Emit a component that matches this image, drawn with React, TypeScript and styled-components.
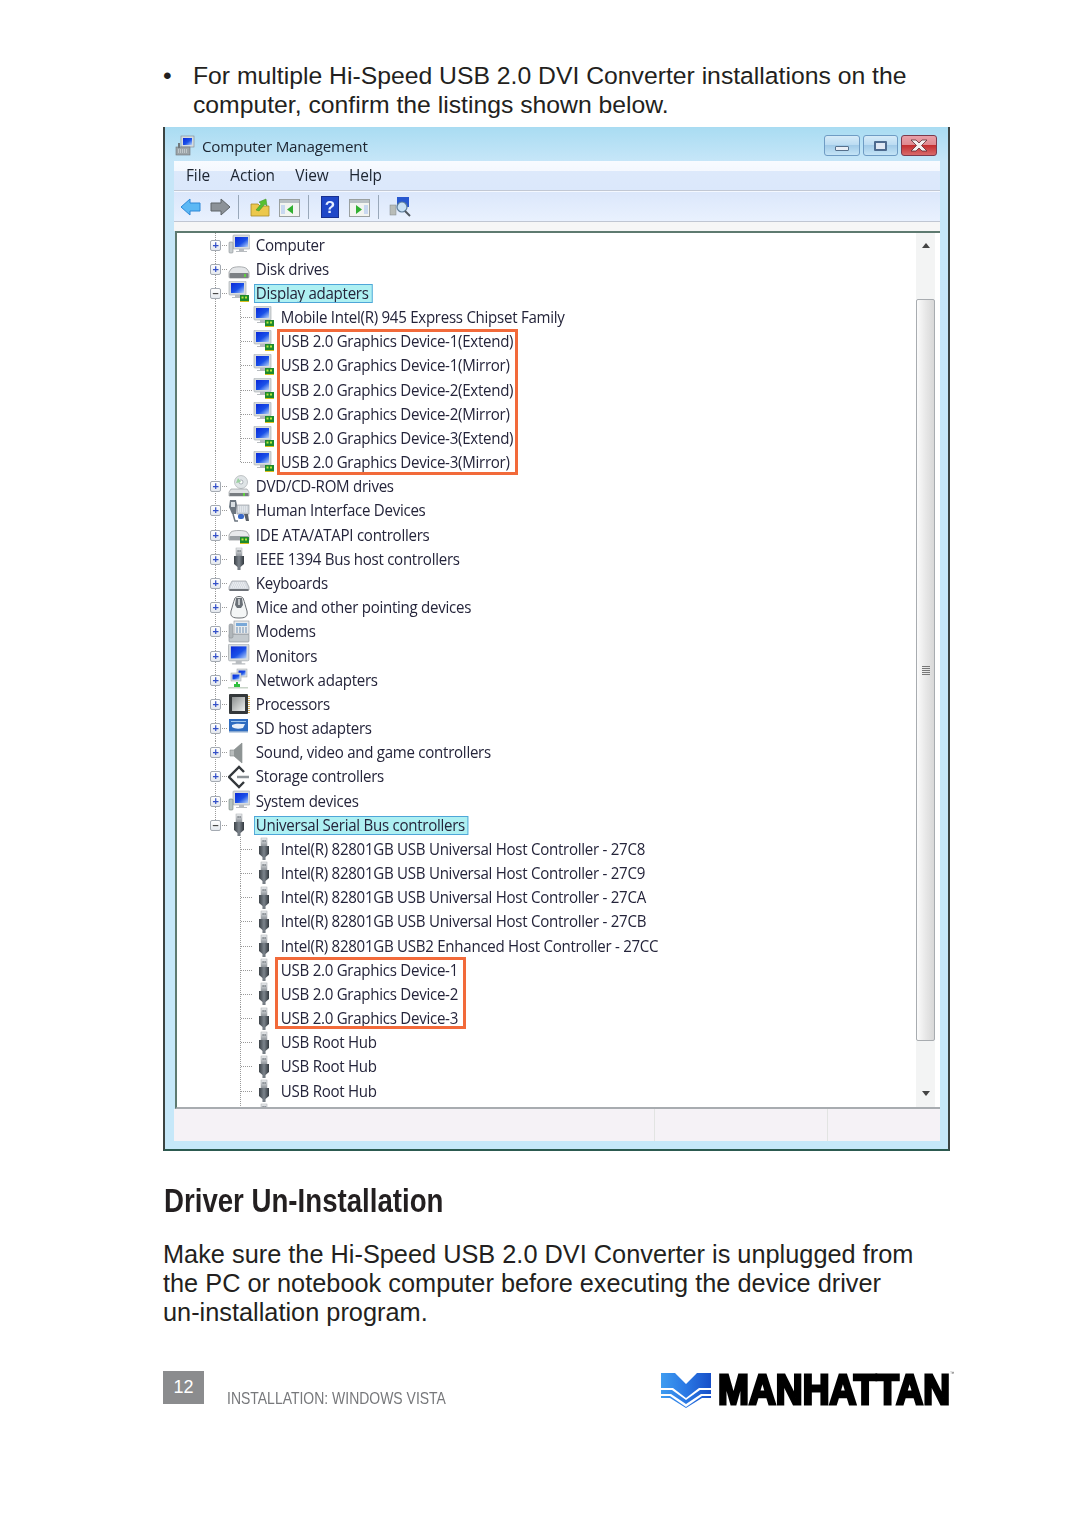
import React from "react";
import styled, { createGlobalStyle } from "styled-components";

const Global = createGlobalStyle`
  html, body { margin: 0; padding: 0; background: #fff; }
  body { font-family: "Liberation Sans", Arial, sans-serif; color: #231f20; }
`;

const Page = styled.div`
  width: 1080px;
  height: 1527px;
  box-sizing: border-box;
  padding: 61px 130px 0 163px;
  overflow: hidden;
`;
const Bullet = styled.div`
  display: flex;
  font-size: 24.74px;
  line-height: 29px;
  margin-bottom: 8px;
  white-space: nowrap;
`;
const Dot = styled.span`
  width: 30px;
  flex: none;
`;
const Win = styled.div`
  width: 787px;
  height: 1024px;
  box-sizing: border-box;
  border: solid #3c4442;
  border-width: 0 2px 2px 2px;
  border-bottom-color: #2c5a50;
  background: linear-gradient(#a9dcf2 0, #c6e6f8 34px, #c6e8f9 100%);
  padding: 0 8px 8px 9px;
  display: flex;
  flex-direction: column;
  filter: blur(0.35px);
`;
const TitleBar = styled.div`
  height: 34px;
  flex: none;
  box-sizing: border-box;
  padding-top: 4px;
  display: flex;
  align-items: center;
  margin-left: 1px;
  font: 15.2px "Open Sans", sans-serif;
  letter-spacing: -0.2px;
  color: #1c2430;
  gap: 7px;
`;
const TitleText = styled.span`
  flex: 1;
`;
const WinButtons = styled.div`
  display: flex;
  gap: 3px;
  margin-right: 3px;
  margin-top: -1px;
`;
const WinBtn = styled.div<{ $close?: boolean; $w?: number }>`
  width: ${(p) => p.$w ?? 35}px;
  height: 21px;
  box-sizing: border-box;
  border: 1.5px solid ${(p) => (p.$close ? "#7c3a4c" : "#6f9cc4")};
  border-radius: 3px;
  display: flex;
  align-items: center;
  justify-content: center;
  background: ${(p) =>
    p.$close
      ? "linear-gradient(#e8a0a8 0, #e08a90 45%, #c42f30 50%, #d86a6a 100%)"
      : "linear-gradient(#d6ebf8 0, #bcdcf2 45%, #a2cbe8 50%, #c4e4f6 100%)"};
`;
const MinGlyph = styled.div`
  width: 14px;
  height: 5px;
  box-sizing: border-box;
  margin-top: 5px;
  background: #e8eef6;
  border: 1px solid #56708c;
  border-radius: 1px;
`;
const MaxGlyph = styled.div`
  width: 13px;
  height: 10px;
  box-sizing: border-box;
  background: #dfe8f4;
  border: 2px solid #4c6a8e;
  border-radius: 1px;
`;
const Client = styled.div`
  flex: 1;
  display: flex;
  flex-direction: column;
  min-height: 0;
`;
const MenuBar = styled.div`
  height: 30px;
  flex: none;
  box-sizing: border-box;
  display: flex;
  align-items: center;
  gap: 20.4px;
  padding: 0 0 1px 12px;
  border-bottom: 1px solid #c2c8d4;
  background: linear-gradient(#f8fbff 0, #f4f8fe 35%, #dde9fb 36%, #dbe8fb 100%);
  font: 15.4px "Open Sans", sans-serif;
  letter-spacing: -0.1px;
  color: #1c2430;
`;
const ToolBar = styled.div`
  height: 31px;
  flex: none;
  box-sizing: border-box;
  display: flex;
  align-items: center;
  padding-top: 1px;
  border-top: 1px solid #f4f8ff;
  border-bottom: 1px solid #c0c6d2;
  background: linear-gradient(#dbe7fb, #e9f1fe);
`;
const ToolSlot = styled.div<{ $w: number }>`
  width: ${(p) => p.$w}px;
  flex: none;
  height: 24px;
  display: flex;
  align-items: center;
  justify-content: center;
`;
const ToolSep = styled.div`
  width: 1px;
  height: 24px;
  flex: none;
  background: #99a8ba;
`;
const PaneGap = styled.div`
  height: 9px;
  flex: none;
  background: #f6f6f6;
`;
const TreePane = styled.div`
  flex: 1;
  min-height: 0;
  display: flex;
  margin-left: 1px;
  border-top: 2px solid #5e7a70;
  border-left: 2px solid #5e7a70;
  border-bottom: 2px solid #a8acb0;
  background: #fff;
`;
const Tree = styled.div`
  flex: 1;
  overflow: hidden;
  font: 16.4px "Open Sans", sans-serif;
  letter-spacing: -0.3px;
  color: #24243a;
`;
const Group = styled.div`
  position: relative;
`;
const Highlight = styled.div<{ $w: number; $top: number; $left: number; $h: number }>`
  position: absolute;
  left: ${(p) => p.$left}px;
  top: ${(p) => p.$top}px;
  width: ${(p) => p.$w}px;
  height: ${(p) => p.$h}px;
  box-sizing: border-box;
  border: 3px solid #f26a3a;
  pointer-events: none;
`;
const Row = styled.div`
  height: 24.18px;
  display: flex;
  align-items: stretch;
  padding-left: 32px;
`;
const dotsV = "repeating-linear-gradient(#9a9a9a 0 1px, transparent 1px 2px)";
const dotsH = "repeating-linear-gradient(90deg, #9a9a9a 0 1px, transparent 1px 2px)";
const Gutter = styled.div<{ $line: "full" | "half" | "none"; $branch?: boolean }>`
  width: 13px;
  flex: none;
  display: flex;
  align-items: center;
  justify-content: center;
  background-image: ${(p) => (p.$line === "none" ? "none" : dotsV)}${(p) => (p.$branch ? `, ${dotsH}` : "")};
  background-repeat: no-repeat;
  background-position: 6px 0${(p) => (p.$branch ? ", 7px 50%" : "")};
  background-size: 1px ${(p) => (p.$line === "half" ? "50%" : "100%")}${(p) => (p.$branch ? ", 6px 1px" : "")};
`;
const Expander = styled.div<{ $plus: boolean }>`
  width: 11px;
  height: 11px;
  box-sizing: border-box;
  border: 1px solid #a4aab2;
  border-radius: 2px;
  background: linear-gradient(#fff, #e4e8ee);
  color: ${(p) => (p.$plus ? "#3450c8" : "#444")};
  display: flex;
  align-items: center;
  justify-content: center;
  font: bold 11px/1 "Liberation Sans", sans-serif;
`;
const Dash = styled.div<{ $w: number }>`
  width: ${(p) => p.$w}px;
  flex: none;
  align-self: center;
  height: 1px;
  background: ${dotsH};
`;
const Spacer = styled.div`
  width: 12px;
  flex: none;
`;
const IconBox = styled.div`
  width: 22px;
  height: 24px;
  flex: none;
  margin-right: 4px;
`;
const Label = styled.span<{ $sel?: boolean }>`
  align-self: center;
  height: 19px;
  line-height: 18px;
  padding: 0 4px 0 2px;
  box-sizing: border-box;
  white-space: nowrap;
  transform: scaleX(0.92);
  transform-origin: left;
  ${(p) => (p.$sel ? "background:#aef0f2;outline:1px solid #4fa6d8;outline-offset:-1px;" : "")}
`;
const ScrollBar = styled.div`
  width: 19px;
  flex: none;
  margin-right: 5px;
  background: #f3f4f4;
  display: flex;
  flex-direction: column;
  align-items: center;
`;
const ArrowUp = styled.div`
  margin-top: 10px;
  height: 56px;
  flex: none;
  &::before {
    content: "";
    display: block;
    border: 4px solid transparent;
    border-top: 0;
    border-bottom: 5px solid #444;
  }
`;
const Thumb = styled.div`
  width: 19px;
  height: 742px;
  flex: none;
  box-sizing: border-box;
  border: 1px solid #a8acb0;
  border-radius: 2px;
  background: linear-gradient(90deg, #fbfbfb, #e8e8e8 50%, #d8d8d8);
  display: flex;
  align-items: center;
  justify-content: center;
`;
const Grip = styled.div`
  width: 8px;
  height: 9px;
  background: repeating-linear-gradient(#777 0 1px, transparent 1px 2px);
`;
const ArrowDown = styled.div`
  margin-top: 50px;
  border: 4px solid transparent;
  border-bottom: 0;
  border-top: 5px solid #444;
`;
const StatusBar = styled.div`
  height: 32px;
  flex: none;
  display: grid;
  grid-template-columns: 481px 173px 1fr;
  background: #f5f2f6;
`;
const StatusCell = styled.div`
  border-right: 1px solid #e2e4e2;
  &:last-child { border-right: 0; }
`;
const Heading = styled.h2`
  margin: 32px 0 0 1px;
  font: bold 32.4px/36px "Liberation Sans", sans-serif;
  color: #231f20;
  transform: scaleX(0.853);
  transform-origin: left;
  white-space: nowrap;
`;
const Para = styled.p`
  margin: 21px 0 0;
  font-size: 25.34px;
  line-height: 29px;
  white-space: nowrap;
`;
const Footer = styled.div`
  margin-top: 44px;
  display: flex;
  align-items: flex-start;
`;
const PageNum = styled.div`
  width: 41px;
  height: 33px;
  background: #8b8c8e;
  color: #fff;
  font-size: 18px;
  line-height: 32px;
  text-align: center;
  flex: none;
`;
const Section = styled.div`
  margin: 18px 0 0 23px;
  flex: 1;
  font-size: 16.6px;
  line-height: 19px;
  color: #77787b;
  white-space: nowrap;
`;
const Section2 = styled.span`
  display: inline-block;
  transform: scaleX(0.842);
  transform-origin: left;
`;
const Logo = styled.div`
  display: flex;
  flex: none;
  width: 293px;
  margin-right: -3px;
  align-items: flex-start;
`;
const LogoWord = styled.div`
  font: bold 43px/36px "Liberation Sans", sans-serif;
  -webkit-text-stroke: 3px #000;
  color: #000;
  letter-spacing: 0.1px;
  margin-left: 6px;
  transform: scaleX(0.862);
  transform-origin: left;
  white-space: nowrap;
`;
const Tm = styled.sup`
  font: 5px/1 "Liberation Sans", sans-serif;
  -webkit-text-stroke: 0;
  vertical-align: 29px;
  color: #555;
`;

type IconName =
  | "computer" | "disk" | "display" | "dvd" | "hid" | "ide" | "usb" | "kbd" | "mouse"
  | "modem" | "monitor" | "net" | "cpu" | "sd" | "sound" | "storage" | "system";

const HiddenSvg = styled.svg`
  position: absolute;
`;
const LogoMark = styled.svg`
  flex: none;
  margin-top: 1px;
`;

const Defs = () => (
  <HiddenSvg width="0" height="0">
    <defs>
      <linearGradient id="scr" x1="0" y1="0" x2="1" y2="1">
        <stop offset="0" stopColor="#0a28d8" />
        <stop offset="0.55" stopColor="#1a50e8" />
        <stop offset="1" stopColor="#b8d4f8" />
      </linearGradient>
      <linearGradient id="plug" x1="0" y1="0" x2="1" y2="0">
        <stop offset="0" stopColor="#3c4248" />
        <stop offset="0.5" stopColor="#7c848c" />
        <stop offset="1" stopColor="#32383e" />
      </linearGradient>
      <linearGradient id="metal" x1="0" y1="0" x2="0" y2="1">
        <stop offset="0" stopColor="#f0f2f4" />
        <stop offset="1" stopColor="#8c9298" />
      </linearGradient>
      <linearGradient id="die" x1="0" y1="0" x2="1" y2="1">
        <stop offset="0" stopColor="#8c9090" />
        <stop offset="1" stopColor="#eef0ee" />
      </linearGradient>
    </defs>
  </HiddenSvg>
);

const Screen = ({ x = 3, y = 1, s = 1 }: { x?: number; y?: number; s?: number }) => (
  <g transform={`translate(${x} ${y}) scale(${s})`}>
    <rect x="0" y="0" width="17" height="14" rx="1" fill="#d8dcde" stroke="#a0a6aa" strokeWidth="0.6" />
    <rect x="2" y="2" width="13" height="10" fill="url(#scr)" />
    <path d="M6 14h5v2h3v1H3v-1h3z" fill="#b8bcc0" />
  </g>
);
const Card = () => (
  <g>
    <rect x="12" y="14" width="9" height="6" fill="#1e8a2c" />
    <rect x="13.5" y="15.5" width="2" height="2" fill="#b8e83c" />
    <rect x="17" y="15.5" width="2" height="2" fill="#b8e83c" />
    <rect x="12" y="20" width="9" height="1" fill="#d8c020" />
  </g>
);

const Icon = ({ name }: { name: IconName }) => {
  const wrap = (c: React.ReactNode) => (
    <svg width="22" height="24" viewBox="0 0 22 24">{c}</svg>
  );
  switch (name) {
    case "computer":
      return wrap(<><Screen x={5} y={2} /><rect x="1" y="9" width="4" height="11" rx="1" fill="#c8ced0" stroke="#8a9094" strokeWidth="0.6" /></>);
    case "disk":
      return wrap(<><path d="M3 12c2-3 14-3 16 0l2 3v5a1 1 0 0 1-1 1H2a1 1 0 0 1-1-1v-5z" fill="#e4e6e8" stroke="#8c9094" strokeWidth="0.7" /><rect x="1.5" y="16" width="19" height="5" rx="1" fill="#7c8084" /><rect x="16" y="17" width="2" height="3" fill="#60d040" /></>);
    case "display":
      return wrap(<><Screen x={1} y={0} /><Card /></>);
    case "dvd":
      return wrap(<><circle cx="13" cy="7" r="6.5" fill="#dfe4e6" stroke="#a0a4a8" strokeWidth="0.6" /><circle cx="13" cy="7" r="2" fill="#fff" stroke="#7e8a90" strokeWidth="0.6" /><path d="M10 3l3 4-5 1z" fill="#9ad0a0" /><path d="M3 14h16l2 3v4H1v-4z" fill="#e0e2e4" stroke="#8c9094" strokeWidth="0.6" /><rect x="1.5" y="18" width="19" height="3" fill="#777c80" /><rect x="15" y="18" width="2" height="3" fill="#60d040" /></>);
    case "hid":
      return wrap(<><path d="M2 1h6l1 5-1 9H4L1 8z" fill="#6c7680" /><rect x="3" y="3" width="4" height="5" fill="#d8dee2" /><rect x="9" y="6" width="12" height="9" fill="#d0d6dc" stroke="#8a9096" strokeWidth="0.6" /><path d="M10 8h10M10 10h10M10 12h10" stroke="#f4f6f8" strokeDasharray="1 1" /><rect x="10" y="15" width="6" height="5" rx="2" fill="#3868c8" /><path d="M16 15h4l1 7h-3z" fill="#5a6068" /><path d="M5 15l2 7h3" stroke="#6c7680" fill="none" strokeWidth="1.500" /></>);
    case "ide":
      return wrap(<><path d="M3 9c2-2 14-2 16 0l2 3v5H1v-5z" fill="#e8eaec" stroke="#8c9094" strokeWidth="0.7" /><rect x="1.5" y="13" width="19" height="4" rx="1" fill="#9aa0a4" /><Card /></>);
    case "usb":
      return wrap(<><rect x="8" y="1" width="6" height="8" fill="url(#metal)" stroke="#a4a8ac" strokeWidth="0.5" /><path d="M6 9h10v8l-3.500 3v3h-3v-3L6 17z" fill="url(#plug)" /><rect x="9.500" y="3" width="1.200" height="2" fill="#7c8288" /><rect x="11.500" y="3" width="1.200" height="2" fill="#7c8288" /></>);
    case "kbd":
      return wrap(<><path d="M4 10h14l3 6v3H1v-3z" fill="#d8dce2" stroke="#868c92" strokeWidth="0.6" /><path d="M5 12h12M4 14h14M3 16h16" stroke="#f8f9fb" strokeDasharray="1 1" /><rect x="1.500" y="18" width="19" height="2" fill="#6e7278" /></>);
    case "mouse":
      return wrap(<><path d="M7 2c-2 5-2 7-4 13-1 6 2 7 8 7s9-1 8-7c-2-6-2-8-4-13-2-2-6-2-8 0z" fill="#f4f6f6" stroke="#6c7074" strokeWidth="1" /><path d="M8 2h6l1 7-2 3H9L7 9z" fill="#6a7076" /><path d="M11 3v6" stroke="#dfe2e4" strokeWidth="1.500" /></>);
    case "modem":
      return wrap(<><rect x="1" y="14" width="20" height="8" rx="1" fill="#c4cace" stroke="#868c90" strokeWidth="0.6" /><rect x="6" y="1" width="15" height="13" fill="#e8ecee" stroke="#8c9296" strokeWidth="0.6" /><rect x="8" y="3" width="11" height="3" fill="#78a8d8" /><path d="M8 8h11M8 10h11M8 12h11" stroke="#6e8eb0" strokeDasharray="2 1" /><rect x="1" y="4" width="4" height="14" rx="1.500" fill="#b0b6ba" stroke="#80868a" strokeWidth="0.5" /></>);
    case "monitor":
      return wrap(<Screen x={0.5} y={0} s={1.2} />);
    case "net":
      return wrap(<><rect x="9" y="1" width="10" height="8" fill="#d8dee2" stroke="#9aa0a4" strokeWidth="0.5" /><rect x="10.500" y="2.500" width="7" height="5" fill="url(#scr)" /><rect x="3" y="5" width="10" height="8" fill="#d8dee2" stroke="#9aa0a4" strokeWidth="0.5" /><rect x="4.500" y="6.500" width="7" height="5" fill="url(#scr)" /><path d="M9 14v3" stroke="#30c040" strokeWidth="2" /><rect x="6" y="16" width="6" height="3" fill="#30c040" /><rect x="0" y="19" width="20" height="1.500" fill="#c8d4c8" /></>);
    case "cpu":
      return wrap(<><rect x="1" y="2" width="19" height="20" rx="1" fill="#34383a" /><rect x="4" y="5" width="13" height="14" fill="url(#die)" /><path d="M21 4v17" stroke="#c89428" strokeWidth="1.500" strokeDasharray="1 1" /></>);
    case "sd":
      return wrap(<><path d="M1 3h19v12H1z" fill="#2e6cc0" /><path d="M3 5h15v1H3z" fill="#9cc4ec" /><path d="M4 9c4-2 9-1 13-1l-2 4c-4 1-8 1-11-1z" fill="#e8f0fa" /><rect x="1" y="15" width="19" height="1.500" fill="#88a8d0" /></>);
    case "sound":
      return wrap(<><path d="M2 9h4l8-7v20l-8-7H2z" fill="#b8bcbc" stroke="#85898a" strokeWidth="0.6" /><path d="M6 9l8-7v20l-8-7z" fill="#8e9494" /></>);
    case "storage":
      return wrap(<><path d="M11 2l10 10-10 10L1 12z" fill="#fff" /><path d="M16 7l-5-5L1 12l10 10 5-5" fill="none" stroke="#34383c" strokeWidth="2.400" /><path d="M9 12h12" stroke="#8e9498" strokeWidth="2.500" /></>);
    case "system":
      return wrap(<><Screen x={5} y={2} /><rect x="1" y="10" width="4" height="11" rx="1" fill="#b8c4c0" stroke="#70807a" strokeWidth="0.6" /></>);
  }
};

type Node = { label: string; icon: IconName; state?: "+" | "-"; sel?: boolean };

const top1: Node[] = [
  { label: "Computer", icon: "computer", state: "+" },
  { label: "Disk drives", icon: "disk", state: "+" },
  { label: "Display adapters", icon: "display", state: "-", sel: true },
];
const mid: Node[] = [
  { label: "DVD/CD-ROM drives", icon: "dvd", state: "+" },
  { label: "Human Interface Devices", icon: "hid", state: "+" },
  { label: "IDE ATA/ATAPI controllers", icon: "ide", state: "+" },
  { label: "IEEE 1394 Bus host controllers", icon: "usb", state: "+" },
  { label: "Keyboards", icon: "kbd", state: "+" },
  { label: "Mice and other pointing devices", icon: "mouse", state: "+" },
  { label: "Modems", icon: "modem", state: "+" },
  { label: "Monitors", icon: "monitor", state: "+" },
  { label: "Network adapters", icon: "net", state: "+" },
  { label: "Processors", icon: "cpu", state: "+" },
  { label: "SD host adapters", icon: "sd", state: "+" },
  { label: "Sound, video and game controllers", icon: "sound", state: "+" },
  { label: "Storage controllers", icon: "storage", state: "+" },
  { label: "System devices", icon: "system", state: "+" },
];
const usbHosts = [
  "Intel(R) 82801GB USB Universal Host Controller - 27C8",
  "Intel(R) 82801GB USB Universal Host Controller - 27C9",
  "Intel(R) 82801GB USB Universal Host Controller - 27CA",
  "Intel(R) 82801GB USB Universal Host Controller - 27CB",
  "Intel(R) 82801GB USB2 Enhanced Host Controller - 27CC",
];
const gfx = ["1(Extend)", "1(Mirror)", "2(Extend)", "2(Mirror)", "3(Extend)", "3(Mirror)"];

const TopRow = ({ n, last }: { n: Node; last?: boolean }) => (
  <Row>
    <Gutter $line={last ? "half" : "full"}>
      <Expander $plus={n.state === "+"}>{n.state === "+" ? "+" : "–"}</Expander>
    </Gutter>
    <Dash $w={6} />
    <IconBox><Icon name={n.icon} /></IconBox>
    <Label $sel={n.sel}>{n.label}</Label>
  </Row>
);
const ChildRow = ({ label, icon, outer, end }: { label: string; icon: IconName; outer: boolean; end?: boolean }) => (
  <Row>
    <Gutter $line={outer ? "full" : "none"} />
    <Spacer />
    <Gutter $line={end ? "half" : "full"} $branch />
    <Dash $w={6} />
    <IconBox><Icon name={icon} /></IconBox>
    <Label>{label}</Label>
  </Row>
);

const Arrow = ({ dir, fill, stroke }: { dir: "l" | "r"; fill: string; stroke: string }) => (
  <svg width="22" height="20" viewBox="0 0 22 20">
    <path
      d={dir === "l" ? "M1 10l9-8v4h10v8H10v4z" : "M21 10l-9-8v4H2v8h10v4z"}
      fill={fill}
      stroke={stroke}
      strokeWidth="1"
    />
  </svg>
);
const PanelIcon = ({ flip }: { flip?: boolean }) => (
  <svg width="21" height="19" viewBox="0 0 21 19">
    <rect x="0.500" y="1.500" width="20" height="17" fill="#f2f4f0" stroke="#9aa0a0" />
    <rect x="1" y="2" width="19" height="3" fill="#b8c0c4" />
    <rect x={flip ? 15 : 2} y="7" width="4" height="9" fill="#c8d8f0" />
    <path d={flip ? "M7 7l6 4.500-6 4.500z" : "M14 7l-6 4.500 6 4.500z"} fill="#30b030" />
  </svg>
);

export default function App() {
  return (
    <>
      <Global />
      <Defs />
      <Page>
        <Bullet>
          <Dot>•</Dot>
          <div>
            For multiple Hi-Speed USB 2.0 DVI Converter installations on the
            <br />
            computer, confirm the listings shown below.
          </div>
        </Bullet>
        <Win>
          <TitleBar>
            <svg width="20" height="22" viewBox="0 0 20 22">
              <rect x="6" y="1" width="13" height="11" fill="#d4dce2" stroke="#7e888e" strokeWidth="0.6" />
              <rect x="8" y="3" width="9" height="7" fill="url(#scr)" />
              <rect x="1" y="12" width="14" height="8" fill="#9ca4a8" stroke="#6e7478" strokeWidth="0.6" />
              <path d="M3 15h10M3 17h10" stroke="#e4e8ea" strokeDasharray="1 1" />
              <path d="M4 8v5" stroke="#70787c" strokeWidth="2" />
            </svg>
            <TitleText>Computer Management</TitleText>
            <WinButtons>
              <WinBtn $w={36}><MinGlyph /></WinBtn>
              <WinBtn $w={35}><MaxGlyph /></WinBtn>
              <WinBtn $close $w={36}>
                <svg width="22" height="13" viewBox="0 0 22 13">
                  <path d="M3 1h5l3 3 3-3h5l-5.500 5.500L19 12h-5l-3-3-3 3H3l5.500-5.500z" fill="#f4f0f0" stroke="#5e2c34" strokeWidth="0.8" />
                </svg>
              </WinBtn>
            </WinButtons>
          </TitleBar>
          <Client>
            <MenuBar>
              <span>File</span>
              <span>Action</span>
              <span>View</span>
              <span>Help</span>
            </MenuBar>
            <ToolBar>
              <ToolSlot $w={34}><Arrow dir="l" fill="#5cb8f4" stroke="#2c88d8" /></ToolSlot>
              <ToolSlot $w={24}><Arrow dir="r" fill="#8c9298" stroke="#5e6468" /></ToolSlot>
              <ToolSlot $w={6} />
              <ToolSep />
              <ToolSlot $w={10} />
              <ToolSlot $w={23}>
                <svg width="21" height="21" viewBox="0 0 21 21">
                  <path d="M1 7h7l2 2h9v10H1z" fill="#ecc84c" stroke="#a88a28" strokeWidth="0.8" />
                  <path d="M6 13l5-6-2-2 7-3 1 7-2-2-6 7z" fill="#58c030" stroke="#3c8c20" strokeWidth="0.5" />
                </svg>
              </ToolSlot>
              <ToolSlot $w={7} />
              <ToolSlot $w={21}><PanelIcon /></ToolSlot>
              <ToolSlot $w={8} />
              <ToolSep />
              <ToolSlot $w={12} />
              <ToolSlot $w={18}>
                <svg width="18" height="22" viewBox="0 0 18 22">
                  <rect x="0.500" y="0.500" width="17" height="21" fill="#2048c8" stroke="#183090" />
                  <text x="9" y="17" textAnchor="middle" fontSize="17" fontWeight="bold" fontFamily="Liberation Sans" fill="#e8f0ff">?</text>
                </svg>
              </ToolSlot>
              <ToolSlot $w={10} />
              <ToolSlot $w={21}><PanelIcon flip /></ToolSlot>
              <ToolSlot $w={8} />
              <ToolSep />
              <ToolSlot $w={10} />
              <ToolSlot $w={22}>
                <svg width="22" height="22" viewBox="0 0 22 22">
                  <rect x="1" y="9" width="6" height="10" fill="#b8bcb8" stroke="#80868a" strokeWidth="0.5" />
                  <rect x="8" y="1" width="12" height="10" fill="#2858d0" />
                  <circle cx="13" cy="11" r="5" fill="#c8e0f4" stroke="#5c7c98" strokeWidth="1.200" />
                  <path d="M16 15l5 5" stroke="#505860" strokeWidth="2" />
                </svg>
              </ToolSlot>
            </ToolBar>
            <PaneGap />
            <TreePane>
              <Tree>
                {top1.map((n) => <TopRow key={n.label} n={n} />)}
                <ChildRow label="Mobile Intel(R) 945 Express Chipset Family" icon="display" outer />
                <Group>
                  {gfx.map((g, i) => (
                    <ChildRow key={g} label={`USB 2.0 Graphics Device-${g}`} icon="display" outer end={i === 5} />
                  ))}
                  <Highlight $left={100} $top={-1} $w={241} $h={146} />
                </Group>
                {mid.map((n) => <TopRow key={n.label} n={n} />)}
                <TopRow n={{ label: "Universal Serial Bus controllers", icon: "usb", state: "-", sel: true }} last />
                {usbHosts.map((h) => <ChildRow key={h} label={h} icon="usb" outer={false} />)}
                <Group>
                  {["1", "2", "3"].map((d) => (
                    <ChildRow key={d} label={`USB 2.0 Graphics Device-${d}`} icon="usb" outer={false} />
                  ))}
                  <Highlight $left={98} $top={-1} $w={191} $h={72} />
                </Group>
                {[0, 1, 2, 3].map((i) => (
                  <ChildRow key={i} label={i < 3 ? "USB Root Hub" : ""} icon="usb" outer={false} />
                ))}
              </Tree>
              <ScrollBar>
                <ArrowUp />
                <Thumb><Grip /></Thumb>
                <ArrowDown />
              </ScrollBar>
            </TreePane>
            <StatusBar>
              <StatusCell />
              <StatusCell />
              <StatusCell />
            </StatusBar>
          </Client>
        </Win>
        <Heading>Driver Un-Installation</Heading>
        <Para>
          Make sure the Hi-Speed USB 2.0 DVI Converter is unplugged from
          <br />
          the PC or notebook computer before executing the device driver
          <br />
          un-installation program.
        </Para>
        <Footer>
          <PageNum>12</PageNum>
          <Section><Section2>INSTALLATION: WINDOWS VISTA</Section2></Section>
          <Logo>
            <LogoMark width="52" height="37" viewBox="0 0 52 37">
              <defs>
                <linearGradient id="lg" x1="0" y1="0" x2="1" y2="0">
                  <stop offset="0" stopColor="#3f9cf0" />
                  <stop offset="0.5" stopColor="#2a78e4" />
                  <stop offset="1" stopColor="#1850c8" />
                </linearGradient>
              </defs>
              <path d="M1 1h14l11 11 11-11h14v15H39l-13 10-13-10H1z" fill="url(#lg)" />
              <path d="M1 18h11l14 10 14-10h11v4H41l-15 10-15-10H1z" fill="url(#lg)" />
              <path d="M1 24h9l16 11 16-11h9v2H42l-16 10-16-10H1z" fill="url(#lg)" />
            </LogoMark>
            <LogoWord>MANHATTAN<Tm>™</Tm></LogoWord>
          </Logo>
        </Footer>
      </Page>
    </>
  );
}
